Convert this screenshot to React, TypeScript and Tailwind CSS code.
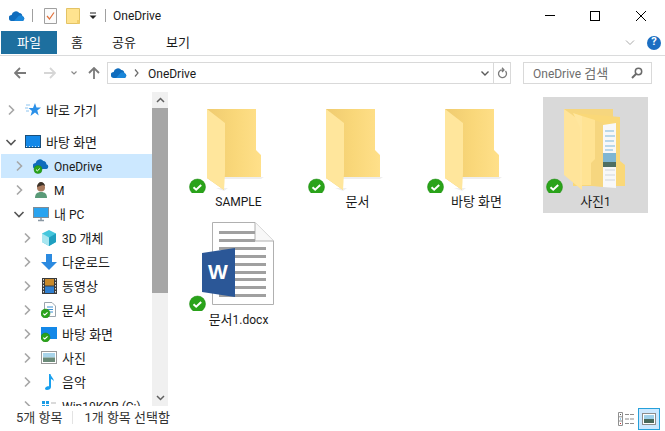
import { ReactNode } from 'react'

function K({ children }: { children: ReactNode }) {
	return <span className="text-[13px]">{children}</span>
}

function Cloud({ size = 16 }: { size?: number }) {
	return (
		<svg width={size} height={size * 0.69} viewBox="0 0 16 11">
			<path d="M3 11a3 3 0 0 1-.4-6A4.4 4.4 0 0 1 10.4 3a3.4 3.4 0 0 1 3 3.2A2.5 2.5 0 0 1 13.500 11z" fill="#0f6cbd" />
			<path d="M5 11l4.500-5a3 3 0 0 1 4 .2A2.500 2.500 0 0 1 13.500 11z" fill="#1a86d9" />
		</svg>
	)
}

function Badge({ cx, cy, r = 8 }: { cx: number; cy: number; r?: number }) {
	const k = r / 8
	return (
		<g>
			<circle cx={cx} cy={cy} r={r} fill="#2aa31a" stroke="#1f8a14" strokeWidth={0.5} />
			<path
				d={`M${cx - 4 * k} ${cy + 0.2 * k}l${2.7 * k} ${2.5 * k}l${5 * k} ${-4.6 * k}`}
				fill="none"
				stroke="#fff"
				strokeWidth={2 * k}
			/>
		</g>
	)
}

function FolderIcon() {
	return (
		<svg width={105} height={96} viewBox="0 0 105 96" className="block">
			<defs>
				<linearGradient id="back" x1="0" x2="1" y1="0" y2="0">
					<stop offset="0" stopColor="#efcb70" />
					<stop offset="0.5" stopColor="#f9d779" />
					<stop offset="1" stopColor="#ffe08a" />
				</linearGradient>
			</defs>
			<path d="M38 80H78L75 82H38zM30 91H42L38 94z" fill="#eeeeee" />
			<path d="M21 12H70V53L75 58V80H38V93L21 81z" fill="url(#back)" />
			<path d="M21 12L39 26V76L38 93L21 81z" fill="#ffe69c" />
			<Badge cx={11.500} cy={90} />
		</svg>
	)
}

function PhotoFolderIcon() {
	return (
		<svg width={105} height={96} viewBox="0 0 105 96" className="block">
			<path d="M21 12H70V30H21z" fill="#f6d67e" />
			<path d="M30 16L77 20V64L82 68V89H30z" fill="#fad878" />
			<path d="M60 28L73 26V91L60 90z" fill="#f8f8f8" />
			<path d="M62 34H71M62 39H72M62 44H71M62 49H72M62 53H70" stroke="#7bb7dc" strokeWidth={1} />
			<path d="M62 73H72M62 78H72M62 83H72" stroke="#cfd6dc" strokeWidth={1} />
			<rect x={60} y={56} width={13} height={14} fill="#7fb6d2" />
			<rect x={60} y={65} width={13} height={5} fill="#4f6f62" />
			<path d="M21 12L39 25V93L21 78z" fill="#ffe49a" />
			<path d="M39 19L60 26V90L39 88z" fill="#f6d67f" />
			<path d="M30 16L39 19V88L37 88V30z" fill="#ffe69e" />
			<path d="M39 19L52 23V62L48 66V88L39 88z" fill="#ffe393" />
			<Badge cx={11.500} cy={90} />
		</svg>
	)
}

function WordIcon() {
	return (
		<svg width={105} height={96} viewBox="0 0 105 96" className="block">
			<path d="M26.500 7.500H69L87.500 26V89.500H26.500z" fill="#fff" stroke="#b0b0b0" />
			<path d="M69 7.500V26H87.500" fill="#f8f8f8" stroke="#b0b0b0" />
			{[16, 24].map((y) => (
				<rect key={y} x={33} y={y} width={36} height={3} fill="#a0a0a0" />
			))}
			{[32, 40, 48, 56, 63, 71, 79].map((y) => (
				<rect key={y} x={33} y={y} width={47} height={3} fill="#a0a0a0" />
			))}
			<path d="M16 38L49 33V82L16 77z" fill="#2b5797" />
			<text x={32} y={64} textAnchor="middle" fontSize={21} fontWeight={700} fill="#fff" fontFamily="Liberation Sans">
				W
			</text>
			<Badge cx={11.500} cy={89} />
		</svg>
	)
}

function Chevron({ open, dim }: { open?: boolean; dim?: boolean }) {
	return (
		<svg width={16} height={16} viewBox="0 0 16 16">
			{open ? (
				<path d="M3.500 6L8 10.500L12.500 6" fill="none" stroke="#555" strokeWidth={1.600} />
			) : (
				<path d="M6 3.500L10.500 8L6 12.500" fill="none" stroke={dim ? '#c0c0c0' : '#a6a6a6'} strokeWidth={1.600} />
			)}
		</svg>
	)
}

const navIcons: Record<string, ReactNode> = {
	star: (
		<svg width={16} height={16} viewBox="0 0 16 16">
			<path d="M10 1l1.500 4.500H16L12.300 8.500l1.400 5L10 10.600 5.500 14l1.500-5L3.500 6H8z" fill="#2b90e8" />
			<path d="M1 3h4M0 6h3M1 9h3" stroke="#8cc4f0" strokeWidth={1} />
		</svg>
	),
	desktop: (
		<svg width={16} height={14} viewBox="0 0 16 14">
			<rect x={0.500} y={0.500} width={15} height={12} fill="#1388e8" stroke="#1a4f7a" />
			<path d="M1 11.500H15" stroke="#cfe6f7" strokeWidth={1} strokeDasharray="1 2" />
		</svg>
	),
	onedrive: (
		<svg width={16} height={16} viewBox="0 0 16 16">
			<path d="M3 11a3 3 0 0 1-.4-6A4.400 4.400 0 0 1 10.400 3a3.400 3.400 0 0 1 3 3.200A2.500 2.500 0 0 1 13.500 11z" fill="#0f6cbd" />
			<Badge cx={5} cy={11.500} r={4} />
		</svg>
	),
	user: (
		<svg width={16} height={16} viewBox="0 0 16 16">
			<path d="M2 16c0-4 2-6 6-6s6 2 6 6z" fill="#5a9a78" />
			<circle cx={8} cy={5.500} r={4} fill="#a87a5e" />
			<path d="M4 5c0-3 2-5 4-5s4 2 4 4l-2-1-3 1z" fill="#3d3228" />
		</svg>
	),
	pc: (
		<svg width={16} height={16} viewBox="0 0 16 16">
			<rect x={0.500} y={1.500} width={15} height={10} fill="#29a3ef" stroke="#7f8c96" />
			<path d="M5 14.500H11M8 12V14" stroke="#8a98a4" strokeWidth={1.500} />
		</svg>
	),
	cube: (
		<svg width={16} height={16} viewBox="0 0 16 16">
			<path d="M8 0L15 3.500V12L8 16L1 12V3.500z" fill="#45c6dc" />
			<path d="M1 3.500L8 7.500V16L1 12z" fill="#a8e6f0" />
			<path d="M8 7.500L15 3.500V12L8 16z" fill="#1f9fc0" />
		</svg>
	),
	download: (
		<svg width={16} height={16} viewBox="0 0 16 16">
			<path d="M5 0H11V8H16L8 16L0 8H5z" fill="#2b8ae0" />
		</svg>
	),
	video: (
		<svg width={15} height={16} viewBox="0 0 15 16">
			<rect x={0} y={0} width={15} height={16} fill="#3a3a3a" />
			<rect x={3} y={1} width={9} height={6.500} fill="#c98a2a" />
			<rect x={3} y={8.500} width={9} height={6.500} fill="#2f7fd0" />
			<path d="M1.500 1V15M13.500 1V15" stroke="#ddd" strokeWidth={1} strokeDasharray="1.500 1.500" />
		</svg>
	),
	docs: (
		<svg width={16} height={16} viewBox="0 0 16 16">
			<path d="M3.500 0.500H11L14.500 4V14.500H3.500z" fill="#fff" stroke="#9aa5ad" />
			<path d="M6 5H12M6 7.500H12M6 10H12" stroke="#3a8fd0" strokeWidth={1} />
			<Badge cx={4.500} cy={11.500} r={4.500} />
		</svg>
	),
	desktopSync: (
		<svg width={16} height={16} viewBox="0 0 16 16">
			<rect x={0} y={1} width={16} height={12} fill="#1388e8" />
			<Badge cx={4.500} cy={11.500} r={4.500} />
		</svg>
	),
	photo: (
		<svg width={16} height={14} viewBox="0 0 16 14">
			<rect x={0.500} y={0.500} width={15} height={12} fill="#fff" stroke="#9a9a9a" />
			<rect x={2} y={2} width={12} height={4.500} fill="#a8d4ea" />
			<rect x={2} y={6.500} width={12} height={4.500} fill="#6a8a78" />
		</svg>
	),
	music: (
		<svg width={16} height={16} viewBox="0 0 16 16">
			<path d="M8 0H9.500C10 3 13 4 13 8c0-1.500-1.500-2.500-3-3V13c0 2-2 3-4 3s-2.500-1.500-1.500-2.500S7 12 8 12.300z" fill="#19a0ee" />
		</svg>
	),
	drive: (
		<svg width={16} height={16} viewBox="0 0 16 16">
			<path d="M1 3h3v3H1zM5 3h3v3H5zM1 7h3v3H1zM5 7h3v3H5z" fill="#1c9ce5" />
			<path d="M10 5h5M10 9h5" stroke="#b5b5b5" strokeWidth={1} />
		</svg>
	),
}

type Row = { label: ReactNode; icon: string; level: number; open?: boolean; active?: boolean; gap?: boolean }

const rows: Row[] = [
	{ label: <K>바로 가기</K>, icon: 'star', level: 0 },
	{ label: <K>바탕 화면</K>, icon: 'desktop', level: 0, open: true, gap: true },
	{ label: 'OneDrive', icon: 'onedrive', level: 1, active: true },
	{ label: 'M', icon: 'user', level: 1 },
	{ label: <><K>내</K> PC</>, icon: 'pc', level: 1, open: true },
	{ label: <>3D <K>개체</K></>, icon: 'cube', level: 2 },
	{ label: <K>다운로드</K>, icon: 'download', level: 2 },
	{ label: <K>동영상</K>, icon: 'video', level: 2 },
	{ label: <K>문서</K>, icon: 'docs', level: 2 },
	{ label: <K>바탕 화면</K>, icon: 'desktopSync', level: 2 },
	{ label: <K>사진</K>, icon: 'photo', level: 2 },
	{ label: <K>음악</K>, icon: 'music', level: 2 },
	{ label: 'Win10KOR (C:)', icon: 'drive', level: 2 },
]

function NavRow({ row }: { row: Row }) {
	return (
		<div
			className={`flex h-6 shrink-0 items-center ${row.gap ? 'mt-2' : ''} ${row.active ? 'ml-px bg-[#cce8ff]' : ''}`}
			style={{ paddingLeft: 3 + row.level * 8 - (row.active ? 1 : 0) }}
		>
			<Chevron open={row.open} />
			<span className="ml-[6px] flex w-4 justify-center">{navIcons[row.icon]}</span>
			<span className="ml-[5px] pt-[2px] text-[12px] text-[#1a1a1a]">{row.label}</span>
		</div>
	)
}

function Item({ label, selected, children }: { label: ReactNode; selected?: boolean; children: ReactNode }) {
	return (
		<div className={`flex h-[116px] w-[105px] flex-col ${selected ? 'bg-[#d9d9d9]' : ''}`}>
			{children}
			<div className="h-4 pt-px text-center text-[12px] leading-4 text-[#1a1a1a]">{label}</div>
		</div>
	)
}

export default function App() {
	return (
		<div className="flex h-[431px] w-[665px] flex-col overflow-hidden bg-white [font-family:'Roboto','Noto_Sans_CJK_KR',sans-serif]">
			{/* title bar */}
			<div className="flex h-[31px] shrink-0 items-center pl-[9px]">
				<Cloud />
				<div className="ml-[7px] h-[13px] w-px bg-[#a0a0a0]" />
				<svg className="ml-[11px]" width={13} height={17} viewBox="0 0 13 17">
					<path d="M.5 1.500H12.500V16.500H.5z" fill="#fbfbfb" stroke="#a0a0a0" />
					<path d="M3 9l2.500 3L10 5.500" fill="none" stroke="#e0703a" strokeWidth={1.200} />
				</svg>
				<svg className="ml-[9px]" width={14} height={16} viewBox="0 0 14 16">
					<path d="M.5.500H13.500V15.500H.5z" fill="#ffe38f" stroke="#e3c365" />
					<path d="M11 12h2.500v3.500H11z" fill="#f3cf6b" />
				</svg>
				<svg className="ml-[9px]" width={8} height={8} viewBox="0 0 8 8">
					<path d="M1 1H7" stroke="#222" />
					<path d="M.5 3.500H7.500L4 7z" fill="#222" />
				</svg>
				<div className="ml-2 h-[13px] w-px bg-[#a0a0a0]" />
				<span className="ml-[7px] pt-px text-[12px] text-[#1a1a1a]">OneDrive</span>
				<div className="ml-auto flex items-center pr-[19px]">
					<div className="h-px w-[10px] bg-black" />
					<div className="ml-[35px] size-[10px] border border-black" />
					<svg className="ml-[36px]" width={10} height={10} viewBox="0 0 10 10">
						<path d="M0 0L10 10M10 0L0 10" stroke="#000" />
					</svg>
				</div>
			</div>

			{/* ribbon tabs */}
			<div className="flex h-[25px] shrink-0 items-stretch border-b border-[#dadbdc] pb-px pl-px text-[13px] text-[#1a1a1a]">
				<div className="flex w-[56px] items-center justify-center bg-[#1d6f9f] text-white">파일</div>
				<div className="ml-[10px] flex w-[20px] items-center justify-center">홈</div>
				<div className="ml-[25px] flex w-[24px] items-center justify-center">공유</div>
				<div className="ml-[30px] flex w-[24px] items-center justify-center">보기</div>
				<div className="ml-auto flex items-center pr-[4px]">
					<svg width={10} height={6} viewBox="0 0 10 6">
						<path d="M1 .5L5 4.500L9 .5" fill="none" stroke="#a9a9a9" />
					</svg>
					<div className="ml-[12px] flex size-[14px] items-center justify-center rounded-full bg-[#1b6ec2] text-[11px] font-bold text-white">?</div>
				</div>
			</div>

			{/* address row */}
			<div className="flex h-[36px] shrink-0 items-center pb-[2px] pl-[14px]">
				<svg width={12} height={12} viewBox="0 0 12 12">
					<path d="M12 6H1.500M6 1L1 6L6 11" fill="none" stroke="#7a7a7a" strokeWidth={1.800} />
				</svg>
				<svg className="ml-[18px]" width={12} height={12} viewBox="0 0 12 12">
					<path d="M0 6H10.500M6 1L11 6L6 11" fill="none" stroke="#d6d6d6" strokeWidth={1.800} />
				</svg>
				<svg className="ml-[15px]" width={6} height={4} viewBox="0 0 6 4">
					<path d="M.5 .5L3 3L5.500 .5" fill="none" stroke="#8a8a8a" strokeWidth={1.200} />
				</svg>
				<svg className="ml-[11px]" width={12} height={12} viewBox="0 0 12 12">
					<path d="M6 12V1.500M1 6L6 1L11 6" fill="none" stroke="#7a7a7a" strokeWidth={1.800} />
				</svg>
				<div className="ml-[7px] flex h-[22px] w-[404px] items-center border border-[#d9d9d9] pl-[3px]">
					<Cloud />
					<svg className="ml-[7px]" width={5} height={8} viewBox="0 0 5 8">
						<path d="M1 .5L4 4L1 7.500" fill="none" stroke="#6a6a6a" strokeWidth={1.200} />
					</svg>
					<span className="ml-[9px] pt-px text-[12px] text-[#1a1a1a]">OneDrive</span>
					<svg className="ml-auto" width={8} height={5} viewBox="0 0 8 5">
						<path d="M.5 .5L4 4L7.500 .5" fill="none" stroke="#5a5a5a" strokeWidth={1.400} />
					</svg>
					<div className="ml-[4px] flex h-full w-[17px] items-center justify-center border-l border-[#d9d9d9]">
						<svg width={11} height={12} viewBox="0 0 11 12">
							<path d="M8.500 4A4 4 0 1 1 3.500 3.200H6M5 .8L7 3L5 5" fill="none" stroke="#7a7a7a" strokeWidth={1.300} />
						</svg>
					</div>
				</div>
				<div className="ml-[12px] flex h-[22px] w-[129px] items-center justify-between border border-[#d9d9d9] pl-[9px] pr-[8px]">
					<span className="pt-px text-[12px] text-[#6d6d6d]">OneDrive <K>검색</K></span>
					<svg width={12} height={12} viewBox="0 0 12 12">
						<circle cx={7.500} cy={4.500} r={3.200} fill="none" stroke="#6a6a6a" strokeWidth={1.500} />
						<path d="M5 7L1 11" stroke="#6a6a6a" strokeWidth={2} />
					</svg>
				</div>
			</div>

			{/* body */}
			<div className="flex min-h-0 flex-1">
				<div className="flex h-full w-[152px] shrink-0 flex-col overflow-hidden pt-[6px]">
					{rows.map((r, i) => (
						<NavRow key={i} row={r} />
					))}
				</div>
				<div className="flex h-full w-4 shrink-0 flex-col bg-[#f0f0f0]">
					<div className="flex h-[16px] items-center justify-center">
						<svg width={9} height={6} viewBox="0 0 9 6">
							<path d="M1 5L4.500 1.500L8 5" fill="none" stroke="#606060" strokeWidth={1.500} />
						</svg>
					</div>
					<div className="h-[185px] bg-[#a6a6a6]" />
					<div className="mt-auto flex h-[16px] items-center justify-center">
						<svg width={9} height={6} viewBox="0 0 9 6">
							<path d="M1 1L4.500 4.500L8 1" fill="none" stroke="#606060" strokeWidth={1.500} />
						</svg>
					</div>
				</div>
				<div className="grid flex-1 grid-cols-[repeat(4,105px)] content-start gap-x-[14px] gap-y-[2px] pl-[18px] pt-[5px]">
					<Item label="SAMPLE"><FolderIcon /></Item>
					<Item label={<K>문서</K>}><FolderIcon /></Item>
					<Item label={<K>바탕 화면</K>}><FolderIcon /></Item>
					<Item label={<><K>사진</K>1</>} selected><PhotoFolderIcon /></Item>
					<Item label={<><K>문서</K>1.docx</>}><WordIcon /></Item>
				</div>
			</div>

			{/* status bar */}
			<div className="flex h-[25px] shrink-0 items-center pb-[2px] pl-[16px] text-[13px] text-[#333]">
				<span>5개 항목</span>
				<div className="ml-[10px] h-[13px] w-px bg-[#e3e3e3]" />
				<span className="ml-[11px]">1개 항목 선택함</span>
				<div className="ml-auto flex items-center pr-[5px] pt-[2px]">
					<svg width={17} height={14} viewBox="0 0 17 14">
						<path d="M.5.500H4.500V13.500H.5zM.5 4.800H4.500M.5 9H4.500" fill="#fff" stroke="#909090" />
						<path d="M2 2H3V3H2z" fill="#555" />
						<path d="M2 6.500H3V7.500H2z" fill="#2a8fd0" />
						<path d="M2 11H3V12H2z" fill="#c03030" />
						<path d="M7 2.500H16M7 7H16M7 11.500H16" stroke="#8c8c8c" strokeDasharray="4 1" />
					</svg>
					<div className="ml-[3px] flex size-[22px] items-center justify-center border border-[#26a0da] bg-[#cce8ff]">
						<svg width={14} height={12} viewBox="0 0 14 12">
							<rect x={0.500} y={0.500} width={13} height={11} fill="#fff" stroke="#8c8c8c" />
							<rect x={2} y={2} width={10} height={4} fill="#9fd0ea" />
							<rect x={2} y={6} width={10} height={4} fill="#48685a" />
						</svg>
					</div>
				</div>
			</div>
		</div>
	)
}
